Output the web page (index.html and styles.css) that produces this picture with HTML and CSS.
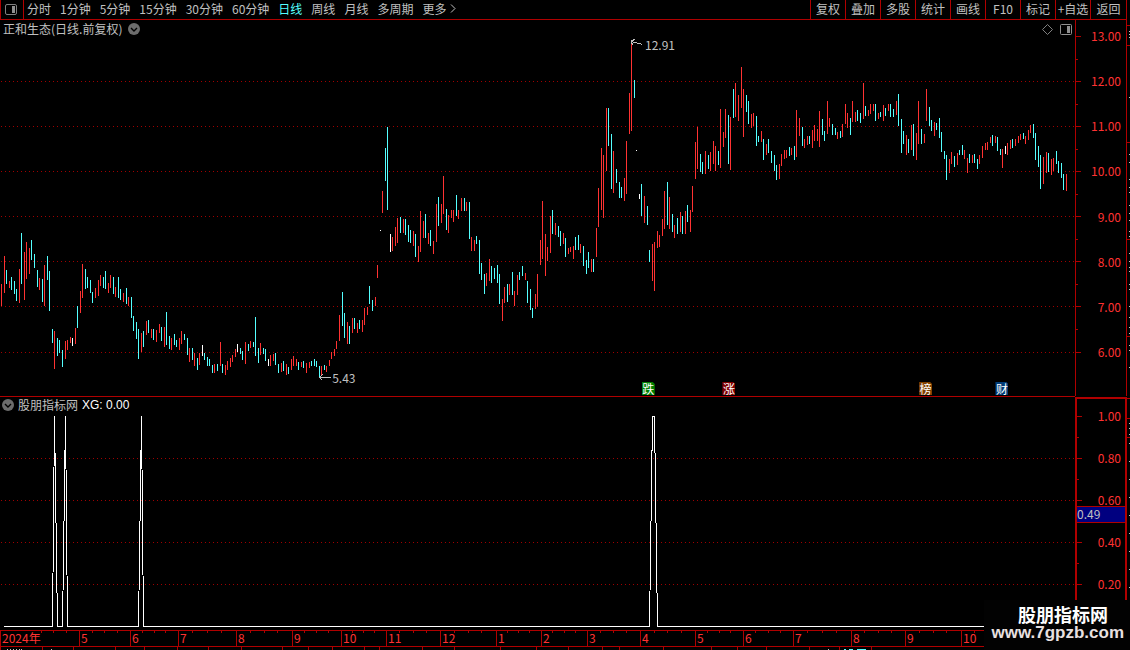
FILE: index.html
```html
<!DOCTYPE html>
<html lang="zh-CN">

<head>
  <meta charset="UTF-8">
  <title>正和生态 日线</title>
  <meta name="viewport" content="width=device-width, initial-scale=1.0">
  <link rel="stylesheet" href="styles.css">
</head>

<body>
  <header class="toolbar">
    <button class="layout-btn" aria-label="布局">
      <svg width="12" height="11" viewBox="0 0 12 11">
        <rect x="0.5" y="0.5" width="11" height="10" rx="1.5" fill="none" stroke="#808080" />
        <rect x="7" y="2" width="3" height="7" fill="#909090" />
      </svg>
    </button>
    <nav class="periods">
      <button>分时</button>
      <button>1分钟</button>
      <button>5分钟</button>
      <button>15分钟</button>
      <button>30分钟</button>
      <button>60分钟</button>
      <button class="active">日线</button>
      <button>周线</button>
      <button>月线</button>
      <button>多周期</button>
      <button class="more">更多
        <svg width="6" height="9" viewBox="0 0 6 9"><path d="M1 0.5L5 4.5L1 8.5" fill="none" stroke="#c0c0c0" /></svg>
      </button>
    </nav>
    <div class="tools">
      <button>复权</button>
      <button>叠加</button>
      <button>多股</button>
      <button>统计</button>
      <button>画线</button>
      <button>F10</button>
      <button>标记</button>
      <button>+自选</button>
      <button class="back">返回</button>
    </div>
  </header>

  <main class="board">
    <section class="panel price">
      <svg class="plot" id="price" viewBox="0 20 1075 376" preserveAspectRatio="none"></svg>
      <div class="panel-head">
        <span>正和生态(日线.前复权)</span>
        <svg width="12" height="12" viewBox="0 0 12 12">
          <circle cx="6" cy="6" r="6" fill="#6c6c6c" />
          <path d="M3 5L6 8L9 5" fill="none" stroke="#000" stroke-width="1.4" />
        </svg>
        <div class="panel-icons">
          <svg width="11" height="11" viewBox="0 0 11 11"><path d="M5.5 0.5L10.5 5.5L5.5 10.5L0.5 5.5Z" fill="none" stroke="#808080" /></svg>
          <svg width="12" height="11" viewBox="0 0 12 11">
            <rect x="0.5" y="0.5" width="11" height="10" rx="1" fill="none" stroke="#909090" />
            <rect x="7" y="2" width="3" height="7" fill="#909090" />
          </svg>
        </div>
      </div>
      <span class="mark high">12.91</span>
      <span class="mark low">5.43</span>
      <span class="tag fall">跌</span>
      <span class="tag rise">涨</span>
      <span class="tag rank">榜</span>
      <span class="tag fin">财</span>
    </section>

    <aside class="axis price-axis">
      <svg class="plot" id="price-ticks" viewBox="0 20 50 376" preserveAspectRatio="none"></svg>
      <ul class="scale">
        <li>13.00</li>
        <li>12.00</li>
        <li>11.00</li>
        <li>10.00</li>
        <li>9.00</li>
        <li>8.00</li>
        <li>7.00</li>
        <li>6.00</li>
      </ul>
    </aside>

    <section class="panel signal">
      <svg class="plot" id="signal" viewBox="0 397 1075 233" preserveAspectRatio="none"></svg>
      <div class="panel-head">
        <svg width="12" height="12" viewBox="0 0 12 12">
          <circle cx="6" cy="6" r="6" fill="#6c6c6c" />
          <path d="M3 5L6 8L9 5" fill="none" stroke="#000" stroke-width="1.4" />
        </svg>
        <span>股朋指标网</span>
        <span class="value">XG: 0.00</span>
      </div>
    </section>

    <aside class="axis signal-axis">
      <svg class="plot" id="signal-ticks" viewBox="0 399 48 231" preserveAspectRatio="none"></svg>
      <ul class="scale">
        <li>1.00</li>
        <li>0.80</li>
        <li>0.60</li>
        <li>0.40</li>
        <li>0.20</li>
      </ul>
      <span class="cursor-value">0.49</span>
    </aside>

    <svg class="gutter" id="gutter" viewBox="1127 20 3 627" preserveAspectRatio="none"></svg>

    <ol class="months" id="months"></ol>
  </main>

  <footer class="next-row">
    <svg class="plot" id="next-row" viewBox="0 647 1130 3" preserveAspectRatio="none"></svg>
  </footer>

  <div class="watermark">
    <strong>股朋指标网</strong>
    <span>www.7gpzb.com</span>
  </div>

  <script src="chart.js"></script>
</body>

</html>
```

FILE: styles.css
```css
* {
  box-sizing: border-box;
  margin: 0;
  padding: 0;
}

body {
  display: flex;
  flex-direction: column;
  height: 100vh;
  overflow: hidden;
  background: #000;
  color: #c0c0c0;
  font: 12px/16px "Noto Sans CJK SC", "Liberation Sans", sans-serif;
}

ul,
ol {
  list-style: none;
}

svg {
  display: block;
}

button {
  background: none;
  border: 0;
  color: inherit;
  font: inherit;
  white-space: nowrap;
  cursor: pointer;
}

/* toolbar */
.toolbar {
  display: flex;
  flex: none;
  height: 20px;
  margin-right: 3px;
  border-bottom: 1px solid #b00000;
}

.layout-btn {
  width: 24px;
  padding: 0 5px 1px 4px;
  border-left: 1px solid #b00000;
  border-right: 1px solid #b00000;
}

.periods {
  display: flex;
  gap: 9px;
  padding: 0 0 2px 3px;
}

.periods .active {
  color: #54ffff;
}

.more {
  display: flex;
  align-items: center;
  gap: 4px;
}

.tools {
  display: flex;
  margin-left: auto;
}

.tools button {
  width: 35px;
  padding-bottom: 2px;
  border-left: 1px solid #b00000;
}

.tools .back {
  width: 37px;
  border-right: 1px solid #b00000;
}

/* charts */
.board {
  display: grid;
  flex: 1;
  min-height: 0;
  grid-template-columns: 1fr 52px 3px;
  grid-template-rows: 376fr 234fr 17px;
}

.panel,
.axis {
  display: grid;
  position: relative;
  min-width: 0;
  min-height: 0;
}

.plot,
.panel-head,
.scale {
  grid-area: 1 / 1;
  min-height: 0;
}

.plot {
  width: 100%;
  height: 100%;
  shape-rendering: crispEdges;
}

.panel-head {
  display: flex;
  align-items: center;
  align-self: start;
  gap: 6px;
  height: 18px;
  padding: 0 3px;
}

.panel-icons {
  display: flex;
  gap: 7px;
  margin-left: auto;
}

.signal {
  border-top: 1px solid #b00000;
}

.signal .panel-head {
  gap: 4px;
  height: 16px;
  padding: 0 2px;
}

.value {
  color: #fff;
  font-family: "Liberation Sans", sans-serif;
}

.mark,
.tag {
  position: absolute;
}

.mark.high {
  left: 60%;
  top: 17px;
}

.mark.low {
  left: 30.9%;
  bottom: 10px;
}

.tag {
  bottom: 1px;
  width: 13px;
  height: 13px;
  color: #fff;
  line-height: 13px;
  text-align: center;
  clip-path: polygon(0 0, 11px 0, 13px 2px, 13px 13px, 0 13px);
}

.fall {
  left: 59.7%;
  background: #008000;
}

.rise {
  left: 67.2%;
  background: #800000;
}

.rank {
  left: 85.5%;
  background: #804000;
}

.fin {
  left: 92.6%;
  background: #003c78;
}

/* value scales */
.axis {
  color: #ff3232;
}

.price-axis {
  border-left: 1px solid #b00000;
  border-right: 1px solid #b00000;
}

.signal-axis {
  margin-top: 1px;
  border: 2px solid #b00000;
  border-bottom: 0;
}

.scale {
  display: flex;
  flex-direction: column;
  justify-content: space-between;
  text-align: right;
}

.price-axis .scale {
  padding: 8px 5px 36px 0;
}

.signal-axis .scale {
  padding: 9px 4px 38px 0;
}

.cursor-value {
  position: absolute;
  top: 46.5%;
  width: 100%;
  height: 17px;
  border: 1px solid #b00000;
  border-width: 1px 0;
  background: #000080;
  color: #c0c0c0;
  line-height: 14px;
}

.gutter {
  grid-area: 1 / 3 / 4 / 4;
  width: 3px;
  height: 100%;
  shape-rendering: crispEdges;
}

/* date scale */
.months {
  display: flex;
  grid-area: 3 / 1 / 4 / 3;
  border: 1px solid #b00000;
  border-width: 1px 0;
  color: #ff3232;
  line-height: 14px;
}

.months li {
  flex-basis: 0;
  min-width: 0;
  text-indent: 2px;
  box-shadow: inset 1px 0 #b00000;
  background-image: linear-gradient(#b00000, #b00000), linear-gradient(#b00000, #b00000), linear-gradient(#b00000, #b00000);
  background-position: 25% 0, 50% 0, 75% 0;
  background-size: 1px 2px;
  background-repeat: no-repeat;
}

.months li:first-child {
  background-position: 52% 0, 68% 0, 84% 0;
}

/* the last month is still running */
.months li:last-child {
  background-position: 8% 0, 16% 0, 24% 0;
}

.next-row {
  flex: none;
  height: 3px;
}

.watermark {
  position: absolute;
  right: 0;
  bottom: 0;
  width: 146px;
  height: 50px;
  padding: 5px 6px 0 0;
  background: #020202;
  color: #fff;
  text-align: right;
}

.watermark strong {
  display: block;
  padding-right: 16px;
  font-size: 18px;
  line-height: 18px;
}

.watermark span {
  display: block;
  color: #e8e0e0;
  font: bold 17px/20px "Liberation Sans", sans-serif;
}
```

FILE: chart.js
```js
const NS = 'http://www.w3.org/2000/svg';
const LINE = '#b00000';
const COLORS = { r: '#ff3232', c: '#54ffff', w: '#ffffff' };

// x, high, low, colour
const bars = `
1 284 306 r,4 256 293 r,6 270 284 c,9 281 288 r,11 277 290 c,14 281 294 c,16 289 301 c,19 269 303 r,21 233 284 c,24 252 300 r,
26 242 279 r,29 248 274 r,31 240 260 c,34 254 268 c,37 270 287 c,39 278 290 r,42 279 302 c,44 265 306 r,47 256 280 c,49 271 311 c,
52 329 343 c,54 331 369 r,57 338 356 c,59 340 353 c,62 350 367 c,65 341 359 r,67 340 350 r,70 337 343 r,72 338 346 w,75 328 344 r,
77 306 328 c,80 291 313 r,82 264 298 r,85 269 289 c,87 277 288 c,90 280 293 c,92 292 303 c,95 288 298 r,98 280 296 r,100 275 286 r,
103 277 288 c,105 271 289 c,108 283 293 r,110 275 288 r,113 277 294 c,115 287 297 r,118 277 298 c,120 289 300 c,123 293 302 r,126 288 304 c,
128 297 306 r,131 297 318 c,133 316 331 c,136 322 339 c,138 329 359 c,141 333 352 r,143 331 347 c,146 321 335 r,148 320 333 c,151 329 338 r,
153 329 340 c,156 330 342 r,159 324 333 r,161 327 341 c,164 327 347 r,166 312 345 c,169 336 349 c,171 338 350 r,174 334 345 c,176 340 347 c,
179 338 350 r,181 331 344 r,184 334 340 c,187 338 355 c,189 348 362 r,192 348 360 c,194 353 366 r,197 358 370 c,199 353 365 r,202 345 356 w,
204 353 360 c,207 357 366 c,209 359 366 c,212 365 373 c,214 364 373 r,217 364 371 c,220 342 366 r,222 364 373 c,225 365 375 r,227 361 370 r,
230 358 367 r,232 355 362 r,235 349 357 r,237 344 352 w,240 348 354 c,242 351 360 c,245 342 364 r,248 344 351 c,250 341 348 r,253 342 347 c,
255 317 356 c,258 348 363 c,260 343 355 r,263 348 354 c,265 349 361 c,268 359 366 w,270 355 366 r,273 354 361 r,275 353 365 c,278 364 373 c,
281 363 372 r,283 361 371 c,286 364 375 r,288 367 374 c,291 359 370 r,293 356 366 r,296 359 366 r,298 362 370 c,301 362 367 r,303 361 368 c,
306 363 373 r,309 362 368 r,311 361 366 c,314 359 366 c,316 361 367 c,319 366 378 c,321 366 376 r,324 365 370 c,326 366 372 r,329 360 366 r,
331 352 359 r,334 349 356 r,336 341 349 r,339 315 341 r,342 292 326 c,344 313 338 c,347 322 344 r,349 326 344 c,352 318 333 r,354 318 329 c,
357 323 333 r,359 320 329 c,362 320 332 r,364 308 325 r,367 307 315 r,369 286 304 c,372 300 311 c,375 297 306 r,377 265 278 r,380 230 231 w,
382 191 213 r,385 148 181 c,387 127 210 c,390 234 252 w,392 237 251 r,395 227 246 r,397 218 243 r,400 217 233 c,403 219 233 r,405 219 235 c,
408 225 242 c,410 230 243 c,413 231 246 r,415 234 257 c,418 246 262 r,420 211 252 r,423 221 238 r,425 214 238 c,428 233 244 r,430 230 246 c,
433 241 254 r,436 204 242 r,438 197 226 c,441 204 223 r,443 176 214 r,446 209 230 c,448 215 233 r,451 210 218 r,453 210 222 r,456 195 216 c,
458 210 219 r,461 198 211 r,464 198 211 c,466 202 211 r,469 202 239 c,471 237 251 r,474 240 251 r,476 236 244 c,479 240 274 c,481 263 280 c,
484 274 294 c,486 273 286 r,489 259 281 r,491 266 283 c,494 268 279 c,497 265 283 c,499 274 304 c,502 299 321 r,504 287 303 r,507 284 302 c,
509 284 295 r,512 272 295 c,514 291 306 r,517 275 295 r,519 272 280 c,522 266 276 c,525 273 280 r,527 281 303 c,530 289 310 c,532 308 318 c,
535 294 309 r,537 274 307 r,540 240 265 r,542 201 259 r,545 234 276 r,547 247 261 r,550 216 253 r,552 210 234 c,555 223 235 r,558 226 237 c,
560 231 246 c,563 233 244 r,565 238 257 c,568 248 254 r,570 247 252 r,573 246 259 r,575 237 250 c,578 235 250 c,580 244 253 r,583 246 266 c,
586 260 274 c,588 252 268 c,591 259 272 r,593 259 272 c,596 228 257 r,598 188 227 r,601 148 210 r,603 155 218 r,606 108 171 r,608 108 146 c,
611 134 189 c,613 151 193 r,616 169 183 c,619 182 198 c,621 187 198 c,624 178 201 r,626 141 194 r,629 93 134 r,631 43 131 r,634 80 98 c,
636 150 151 w,639 194 199 w,641 184 216 c,644 196 223 r,647 206 225 c,649 250 262 c,652 244 281 r,654 242 291 r,657 231 248 r,659 235 247 r,
662 219 236 r,664 191 229 r,667 182 225 c,669 197 229 r,672 214 232 c,674 225 238 r,677 218 234 c,680 212 232 r,682 216 234 c,685 211 234 r,
687 205 222 c,690 210 232 r,692 186 212 r,695 142 179 r,697 127 169 r,700 154 172 c,702 162 174 c,705 151 174 r,708 155 169 c,710 152 171 r,
713 141 164 r,715 146 171 r,718 151 165 c,720 109 168 r,723 132 147 r,725 109 138 r,728 115 164 c,730 117 170 r,733 89 118 c,735 83 117 r,
738 95 121 r,741 67 108 r,743 89 137 r,746 95 112 c,748 101 124 c,751 114 128 r,753 113 126 r,756 116 146 c,758 136 142 c,761 131 142 r,
763 139 160 c,766 144 155 r,768 139 153 c,771 151 163 c,774 155 171 c,776 165 180 c,779 164 179 r,781 154 166 r,784 150 159 r,786 150 158 r,
789 147 156 c,791 148 155 r,794 146 160 c,796 110 157 r,799 118 136 r,802 127 146 c,804 139 148 r,807 136 145 r,809 136 144 c,812 130 148 r,
814 125 141 r,817 129 141 r,819 111 147 r,822 119 135 c,824 131 141 c,827 101 134 r,829 118 127 r,832 124 135 c,835 128 135 c,837 132 139 r,
840 131 138 c,842 124 137 r,845 104 124 r,847 113 128 r,850 118 135 c,852 101 122 r,855 112 122 r,857 110 121 c,860 113 123 c,863 83 119 r,
865 106 116 c,868 110 116 r,870 104 114 r,873 104 111 r,875 104 121 c,878 113 119 r,880 112 117 c,883 105 121 r,885 108 116 c,888 104 111 r,
890 104 117 c,893 109 117 c,896 101 115 r,898 94 126 c,901 119 153 c,903 131 144 c,906 135 155 r,908 139 153 c,911 125 150 r,913 124 156 c,
916 133 160 r,918 101 144 r,921 129 144 c,924 134 143 r,926 89 121 r,929 107 126 c,931 120 131 c,934 122 136 r,936 123 130 c,939 118 138 c,
941 132 152 c,944 151 159 c,946 155 180 c,949 159 173 r,951 152 164 r,954 156 167 c,957 153 165 r,959 150 155 c,962 145 155 c,964 150 159 r,
967 158 173 r,969 154 163 c,972 155 163 r,974 154 163 c,977 159 169 c,979 155 164 r,982 146 158 r,985 143 150 r,987 142 150 r,990 137 143 r,
992 135 146 c,995 136 143 r,997 137 151 c,1000 149 155 c,1002 149 168 r,1005 146 154 w,1007 143 155 r,1010 140 149 r,1012 139 148 c,1015 139 146 r,
1018 136 143 r,1020 134 140 r,1023 133 139 c,1025 136 144 r,1028 130 140 r,1030 125 133 r,1033 124 138 c,1035 133 160 c,1038 146 167 c,1040 155 189 c,
1043 157 184 r,1046 152 173 r,1048 153 172 c,1051 159 175 r,1053 158 171 r,1056 151 164 c,1058 161 173 c,1061 163 178 c,1063 174 190 c,1066 174 191 r
`.trim().split(',').map(item => item.trim().split(' '));

const months = [
  ['2024年', 79], ['5', 51], ['6', 48], ['7', 58], ['8', 56], ['9', 49], ['10', 45], ['11', 54],
  ['12', 56], ['1', 45], ['2', 46], ['3', 53], ['4', 55], ['5', 48], ['6', 50], ['7', 58],
  ['8', 54], ['9', 56], ['10', 166]
];

function add(svg, name, attrs) {
  const el = document.createElementNS(NS, name);
  Object.keys(attrs).forEach(key => el.setAttribute(key, attrs[key]));
  svg.appendChild(el);
}

function rect(svg, x, y, width, height, fill) {
  add(svg, 'rect', { x, y, width, height, fill });
}

function grid(svg, rows) {
  rows.forEach(y => {
    add(svg, 'path', { d: `M1 ${y + 0.5}H1075`, stroke: '#a00000', 'stroke-dasharray': '1 3' });
  });
}

function drawPrice() {
  const svg = document.getElementById('price');
  grid(svg, [81, 126, 171, 216, 261, 306, 352]);
  bars.forEach(([x, high, low, color]) => rect(svg, x, high, 1, low - high, COLORS[color]));

  // arrows to the highest and lowest price
  add(svg, 'path', { d: 'M642.5 44.5L631.5 41.5M635.5 39.5L631.5 40.5V43.5L633.5 44.5', fill: 'none', stroke: '#c0c0c0' });
  add(svg, 'path', { d: 'M331 377.5H319M322.5 374.5L319.5 377.5L322.5 380.5', fill: 'none', stroke: '#c0c0c0' });
}

function drawSignal() {
  const svg = document.getElementById('signal');
  grid(svg, [458, 500, 542, 584]);
  add(svg, 'polyline', {
    points: '4,626.5 52.5,626.5 54.5,416 57.5,626.5 62.5,626.5 65.5,416 67.5,626.5 138.5,626.5 141.5,416 143.5,626.5 ' +
      '649.5,626.5 652.5,416.5 654.5,416.5 657.5,626.5 1075,626.5',
    fill: 'none',
    stroke: '#fff'
  });
}

function drawTicks(id, major, minor) {
  const svg = document.getElementById(id);
  major.forEach(y => rect(svg, 0, y, 5, 1, LINE));
  minor.forEach(y => rect(svg, 0, y, 2, 1, LINE));
}

function drawEdges() {
  const gutter = document.getElementById('gutter');
  [25, 45, 142, 239, 336, 398, 418, 437].forEach(y => rect(gutter, 1127, y, 3, 1, LINE));
  [31, 34, 37, 97, 154, 162, 179, 187, 192, 205, 213, 220, 231, 236, 253, 261, 267, 271, 284, 289, 306, 317,
    327, 333, 345, 350, 367, 423, 428, 434, 443, 461, 479, 497, 515, 533, 551, 569, 587]
    .forEach(y => rect(gutter, 1129, y, 1, 1, '#c0c0c0'));

  const next = document.getElementById('next-row');
  [0, 42, 73, 115, 144, 177, 208, 241, 282, 308, 332, 364, 379, 422, 454, 500, 536, 568, 602, 619, 663, 711,
    737, 766, 809, 839, 871].forEach(x => rect(next, x, 647, 1, 3, LINE));
  [7, 10, 13, 16, 19, 21, 51, 828].forEach(x => rect(next, x, 649, 1, 1, '#c0c0c0'));
  [[844, 2], [849, 4], [857, 9]].forEach(([x, w]) => rect(next, x, 649, w, 1, COLORS.c));
}

function genMonths() {
  const list = document.getElementById('months');
  months.forEach(([label, width]) => {
    const li = document.createElement('li');
    li.textContent = label;
    li.style.flexGrow = width;
    list.appendChild(li);
  });
}

drawPrice();
drawSignal();
drawTicks('price-ticks', [36, 81, 126, 171, 216, 261, 306, 352], [59, 104, 149, 194, 239, 284, 329]);
drawTicks('signal-ticks', [416, 458, 500, 542, 584], [437, 479, 563]);
drawEdges();
genMonths();
```
